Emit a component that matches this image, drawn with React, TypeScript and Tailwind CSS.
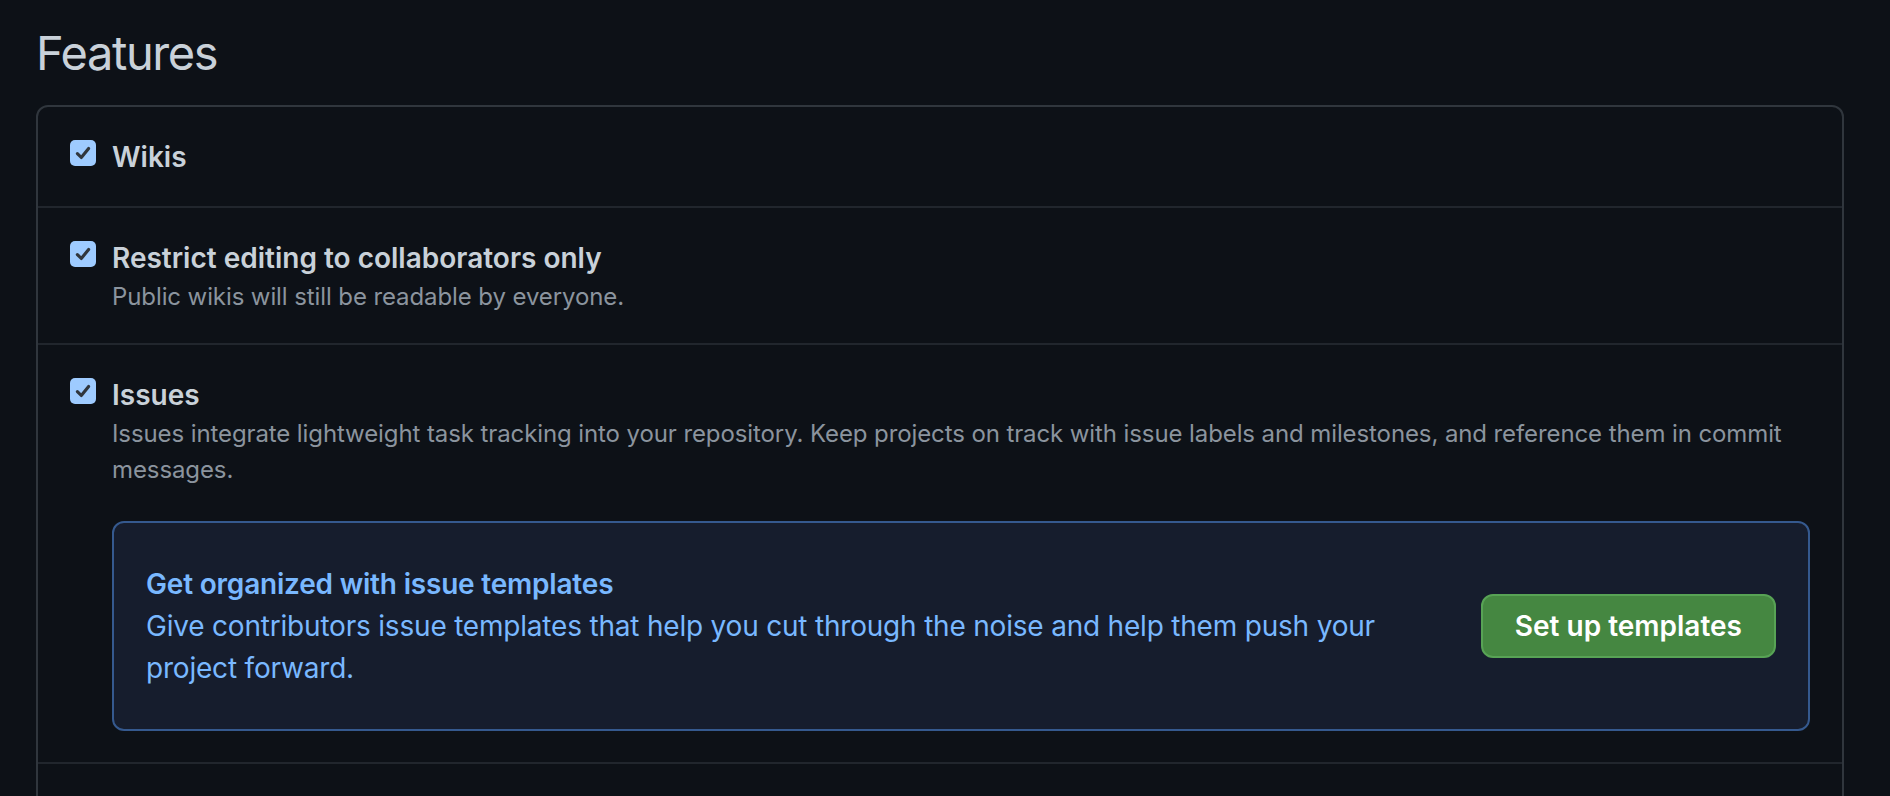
import React from 'react';

function Check() {
  return (
    <div className="mt-[4px] flex h-[26px] w-[26px] shrink-0 items-center justify-center rounded-[5px] bg-[#9ecbff]">
      <svg width="18" height="18" viewBox="0 0 16 16" fill="none" stroke="#30363d" strokeWidth="2.8" strokeLinecap="round" strokeLinejoin="round">
        <polyline points="3 8.5 6.5 12 13 4" />
      </svg>
    </div>
  );
}

type Item = { title: string; description?: string; children?: React.ReactNode };

function FeatureRow({ title, description, children }: Item) {
  return (
    <div className={`flex items-start gap-4 border-t-2 border-[#21262d] px-8 pt-[29px] first:border-t-0 ${children ? 'pb-[31px]' : 'pb-[28px]'}`}>
      <Check />
      <div className="min-w-0 flex-1">
        <div className="text-[28px] font-semibold leading-[42px] text-[#c9d1d9]">{title}</div>
        {description && <p className="text-[24px] leading-[36px] tracking-[-0.1px] text-[#8b949e]">{description}</p>}
        {children}
      </div>
    </div>
  );
}

export default function App() {
  return (
    <div className="min-h-screen bg-[#0d1117] pl-[36px] pr-[46px] pt-[23px]" style={{ fontFamily: 'Inter, "Noto Sans", sans-serif' }}>
      <h2 className="mb-[22px] text-[47px] font-normal leading-[60px] tracking-[-1.4px] text-[#c9d1d9]">Features</h2>

      <div className="rounded-[12px] border-2 border-[#30363d]">
        <FeatureRow title="Wikis" />
        <FeatureRow title="Restrict editing to collaborators only" description="Public wikis will still be readable by everyone." />
        <FeatureRow
          title="Issues"
          description="Issues integrate lightweight task tracking into your repository. Keep projects on track with issue labels and milestones, and reference them in commit messages."
        >
          <div className="mt-[33px] flex items-center rounded-[12px] border-2 border-[#35598e] bg-[#161d2d] px-8 py-10">
            <div className="max-w-[1300px] flex-1 pr-10 text-[28px] leading-[42px] tracking-[-0.2px] text-[#79b8ff]">
              <div className="font-semibold">Get organized with issue templates</div>
              <div>Give contributors issue templates that help you cut through the noise and help them push your project forward.</div>
            </div>
            <button className="ml-auto h-[64px] shrink-0 rounded-[12px] border-2 border-[#58a355] bg-[#458741] px-8 text-[28px] font-semibold text-white">
              Set up templates
            </button>
          </div>
        </FeatureRow>
        {/* next row continues below the fold */}
        <div className="h-[80px] border-t-2 border-[#21262d]" />
      </div>
    </div>
  );
}
